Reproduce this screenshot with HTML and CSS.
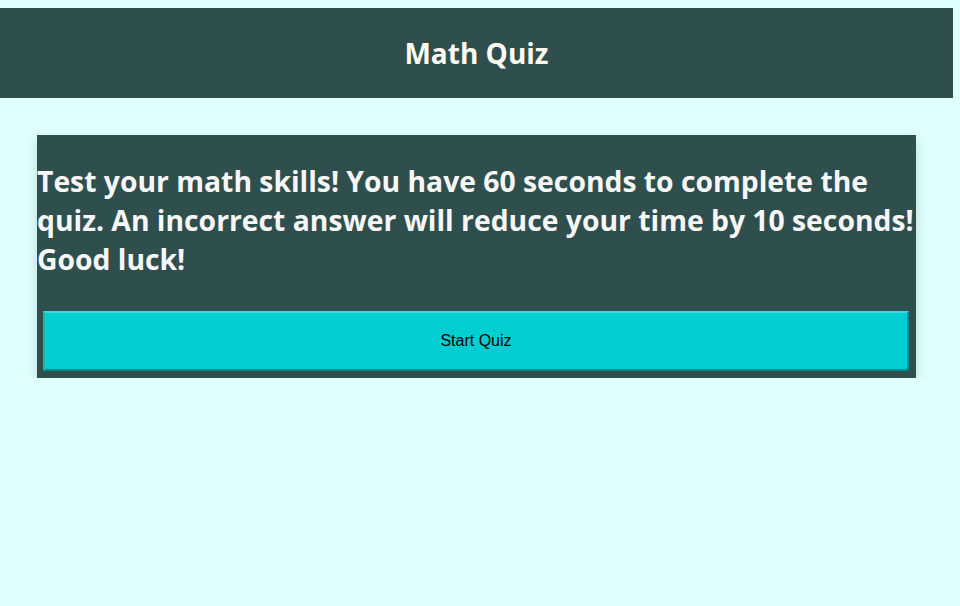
FILE: index.html
```html
<!DOCTYPE html>
<html>
<head>
<meta charset="utf-8">
<title>Math Quiz</title>
<link rel="stylesheet" href="styles.css">
</head>
<body>
<header class="site-header">
  <h1 class="title">Math Quiz</h1>
</header>
<main class="card">
  <p class="intro">Test your math skills! You have 60 seconds to complete the quiz. An incorrect answer will reduce your time by 10 seconds! Good luck!</p>
  <button class="start-btn">Start Quiz</button>
</main>
</body>
</html>
```
FILE: styles.css
```css
html, body {
  background: #e0ffff;
}
body {
  margin: 8px 7px 8px 0;
  font-family: "Open Sans", "Noto Sans", sans-serif;
}
.site-header {
  background: #2f4f4f;
  height: 90px;
  display: flex;
  align-items: center;
  justify-content: center;
}
.title {
  margin: 0;
  color: #fffaf0;
  font-size: 28px;
  font-weight: 700;
  line-height: 1;
}
.card {
  background: #2f4f4f;
  width: 879px;
  margin: 37px 0 0 37px;
  padding: 27px 0 7px;
  box-sizing: border-box;
  box-shadow: 0 5px 12px rgba(0, 0, 0, 0.15);
  display: flex;
  flex-direction: column;
}
.intro {
  margin: 0 0 32px;
  color: #f7f7f7;
  font-size: 28.3px;
  font-weight: 700;
  line-height: 39px;
}
.start-btn {
  margin: 0 7px 0 6px;
  height: 60px;
  background: #00ced1;
  border-width: 2px;
  border-style: solid;
  border-color: #3ad8db #008a8c #008a8c #1fb0b3;
  font-family: "Liberation Sans", Arial, sans-serif;
  font-size: 16px;
  color: #000;
  padding: 0;
}
```
